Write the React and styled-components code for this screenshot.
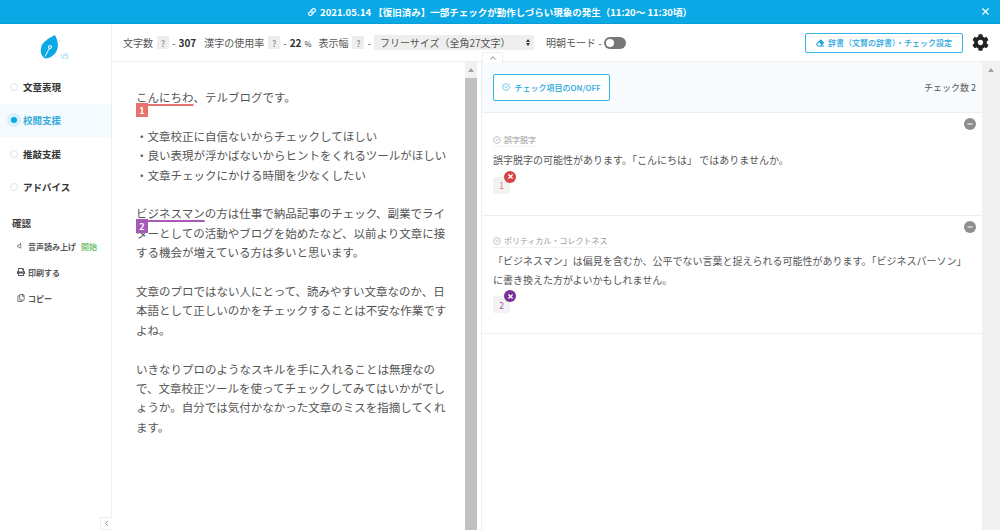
import React from 'react';
import styled, { createGlobalStyle } from 'styled-components';
import { FaCog, FaEraser, FaPrint, FaRegCopy, FaLink, FaTimes, FaMinus } from 'react-icons/fa';
import { FiVolume, FiCheckCircle, FiChevronUp, FiChevronLeft, FiX } from 'react-icons/fi';

const GlobalStyle = createGlobalStyle`
  html, body {
    margin: 0;
    padding: 0;
    background: #fff;
    font-family: "Noto Sans CJK JP", "Noto Sans", sans-serif;
    color: #444;
  }
  * { box-sizing: border-box; }
`;

const Page = styled.div`
  position: relative;
  width: 1000px;
  height: 530px;
  display: flex;
  flex-direction: column;
  overflow: hidden;
`;

const Banner = styled.div`
  position: relative;
  height: 24px;
  flex: none;
  display: flex;
  align-items: center;
  justify-content: center;
  gap: 4px;
  background: #0aa8e4;
  border-bottom: 1px solid #0b9ed6;
  color: #fff;
  font-size: 9.5px;
  font-weight: 700;
`;

const BannerClose = styled.span`
  position: absolute;
  right: 9px;
  top: 6px;
  display: flex;
`;

const Body = styled.div`
  flex: 1;
  display: flex;
  min-height: 0;
`;

const Sidebar = styled.aside`
  width: 112px;
  flex: none;
  border-right: 1px solid #eee;
  padding-top: 11px;
`;

const Logo = styled.div`
  height: 35px;
  display: flex;
  justify-content: center;
  align-items: flex-start;
  padding-right: 2px;
  color: #8fd0ee;
  small {
    font-size: 7.5px;
    line-height: 8px;
    margin: 17px 0 0 1px;
  }
`;

const NavItem = styled.div`
  height: 33.5px;
  display: flex;
  align-items: center;
  gap: 2px;
  padding-left: 7px;
  font-size: 9.5px;
  font-weight: 700;
  color: ${p => (p.$active ? '#35a9dc' : '#333')};
  background: ${p => (p.$active ? '#f4fbfe' : 'transparent')};
`;

const NavDot = styled.span`
  width: 14px;
  height: 14px;
  flex: none;
  border-radius: 50%;
  display: flex;
  align-items: center;
  justify-content: center;
  background: ${p => (p.$active ? '#d8f0fb' : 'transparent')};
  &::after {
    content: '';
    width: 6px;
    height: 6px;
    border-radius: 50%;
    background: ${p => (p.$active ? '#0aa8e4' : '#fff')};
    border: ${p => (p.$active ? 'none' : '1px solid #e2e2e2')};
  }
`;

const SideTitle = styled.div`
  margin: 11px 0 2px 12px;
  font-size: 9.5px;
  font-weight: 700;
  line-height: 16px;
  color: #444;
`;

const SideLink = styled.div`
  height: 26px;
  display: flex;
  align-items: center;
  gap: 3px;
  padding-left: 17px;
  font-size: 8px;
  font-weight: 700;
  color: #555;
  em {
    font-style: normal;
    font-weight: 500;
    color: #5cb85c;
    margin-left: 2px;
  }
`;

const Main = styled.main`
  flex: 1;
  min-width: 0;
  display: flex;
  flex-direction: column;
`;

const Header = styled.header`
  height: 38px;
  flex: none;
  display: flex;
  align-items: center;
  padding: 0 11px;
  border-bottom: 1px solid #eee;
  font-size: 10px;
  color: #555;
`;

const Help = styled.span`
  width: 12px;
  height: 13px;
  margin: 0 3px 0 4px;
  display: inline-flex;
  align-items: center;
  justify-content: center;
  background: #eee;
  color: #777;
  font-size: 8.5px;
`;

const Stat = styled.b`
  margin: 0 8px 0 3px;
  color: #333;
  font-size: 10px;
  font-weight: 700;
  small {
    font-size: 7.5px;
    font-weight: 400;
    margin: 0 -1px 0 3px;
  }
`;

const Select = styled.div`
  width: 160px;
  height: 15px;
  margin: 0 12px 0 3px;
  padding: 0 4px 0 6px;
  display: flex;
  align-items: center;
  justify-content: space-between;
  background: #eee;
  color: #555;
  font-size: 10px;
`;

const SelectArrows = styled.span`
  display: flex;
  flex-direction: column;
  gap: 1px;
  &::before, &::after {
    content: '';
    border-left: 2px solid transparent;
    border-right: 2px solid transparent;
  }
  &::before { border-bottom: 3px solid #333; }
  &::after { border-top: 3px solid #333; }
`;

const Toggle = styled.span`
  width: 22px;
  height: 12px;
  margin-left: 2px;
  border-radius: 6px;
  background: #777;
  padding: 2px;
  display: flex;
  &::before {
    content: '';
    width: 8px;
    height: 8px;
    border-radius: 50%;
    background: #fff;
  }
`;

const OutlineButton = styled.div`
  height: ${p => p.$h}px;
  width: ${p => p.$w}px;
  display: flex;
  align-items: center;
  justify-content: center;
  gap: 4px;
  flex: none;
  border: 1px solid #35b4e6;
  border-radius: 2px;
  background: #fff;
  color: #1ea5dc;
  font-size: 8px;
  font-weight: 500;
`;

const DictButton = styled(OutlineButton)`
  margin-left: auto;
`;

const Gear = styled.span`
  display: flex;
  margin-left: 9px;
  color: #222;
`;

const Panes = styled.div`
  flex: 1;
  min-height: 0;
  display: flex;
`;

const Editor = styled.section`
  width: 353px;
  flex: none;
  padding: 26px 16px 0 24px;
  font-size: 11.5px;
  line-height: 19.4px;
  color: #555;
  white-space: nowrap;
`;

const Line = styled.div`
  min-height: 19.4px;
`;

const Marked = styled.span`
  position: relative;
  text-decoration: underline ${p => p.$color} 1.5px;
  text-underline-offset: 1.5px;
`;

const MarkTag = styled.span`
  position: absolute;
  left: 0;
  top: 14px;
  width: 12px;
  height: 14px;
  display: flex;
  align-items: center;
  justify-content: center;
  background: ${p => p.$color};
  color: #fff;
  font-size: 9px;
  font-weight: 700;
  line-height: 1;
`;

const Scrollbar = styled.div`
  width: ${p => p.$w}px;
  flex: none;
  display: flex;
  flex-direction: column;
  background: #f1f1f1;
`;

const ScrollArrow = styled.div`
  height: 16px;
  flex: none;
  display: flex;
  align-items: center;
  justify-content: center;
  &::before {
    content: '';
    border-left: 3px solid transparent;
    border-right: 3px solid transparent;
    border-bottom: 4px solid #a3a3a3;
  }
`;

const ScrollThumb = styled.div`
  flex: 1;
  background: #c1c1c1;
`;

const Gutter = styled.div`
  width: 5px;
  flex: none;
  border-right: 1px solid #eee;
`;

const Results = styled.section`
  flex: 1;
  min-width: 0;
  display: flex;
  flex-direction: column;
`;

const ResultsBar = styled.div`
  height: 51px;
  flex: none;
  display: flex;
  align-items: center;
  justify-content: space-between;
  padding: 0 6px 0 11px;
  background: #f7fbfd;
  border-bottom: 1px solid #eee;
  font-size: 9px;
  color: #555;
`;

const Card = styled.article`
  position: relative;
  height: ${p => p.$h}px;
  padding: ${p => p.$top}px 8px 0 11px;
  border-bottom: 1px solid #eee;
`;

const CardTitle = styled.div`
  display: flex;
  width: fit-content;
  align-items: center;
  gap: 3px;
  height: 14px;
  color: #9a9a9a;
  font-size: 8px;
  border-bottom: 1px solid #f3f3f3;
`;

const CardText = styled.p`
  margin: 4px 0 0;
  font-size: 10px;
  line-height: 18.5px;
  color: #555;
`;

const Chip = styled.div`
  position: relative;
  width: 17px;
  height: 17px;
  margin-top: 7px;
  display: flex;
  align-items: center;
  justify-content: center;
  background: #f2f2f2;
  border-radius: 2px;
  font-size: 8.5px;
  color: ${p => p.$color};
`;

const ChipRemove = styled.span`
  position: absolute;
  right: -6px;
  top: -6px;
  width: 12px;
  height: 12px;
  display: flex;
  align-items: center;
  justify-content: center;
  border-radius: 50%;
  background: ${p => p.$color};
  color: #fff;
`;

const Collapse = styled.span`
  position: absolute;
  top: 5px;
  right: 6px;
  width: 12px;
  height: 12px;
  display: flex;
  align-items: center;
  justify-content: center;
  border-radius: 50%;
  background: #8e8e8e;
  color: #fff;
`;

const TopTab = styled.div`
  position: absolute;
  left: 482px;
  top: 52px;
  width: 21px;
  height: 11px;
  display: flex;
  align-items: center;
  justify-content: center;
  background: #fff;
  border: 1px solid #eee;
  border-bottom: none;
  border-radius: 2px 2px 0 0;
  color: #666;
`;

const SideTab = styled.div`
  position: absolute;
  left: 100px;
  top: 517px;
  width: 12px;
  height: 13px;
  display: flex;
  align-items: center;
  justify-content: center;
  background: #fff;
  border: 1px solid #eee;
  border-right: none;
  color: #666;
`;

const LeafLogo = () => (
  <svg width="19" height="24" viewBox="0 0 19 24">
    <path d="M15 0C17.500 5 19 10 17 15C15.500 19 11 23 6 23.500C2 22.500 0 18 1 13C2 7 9 3 15 0Z" fill="#0aa8e4" />
    <path d="M5 21.500L9.500 13" stroke="#fff" strokeWidth="1" fill="none" />
    <circle cx="10" cy="12" r="1.500" fill="none" stroke="#fff" strokeWidth="1" />
  </svg>
);

const navItems = [
  { label: '文章表現' },
  { label: '校閲支援', active: true },
  { label: '推敲支援' },
  { label: 'アドバイス' },
];

const App = () => (
  <Page>
    <GlobalStyle />
    <Banner>
      <FaLink size={8} />
      <span>2021.05.14 【復旧済み】一部チェックが動作しづらい現象の発生（11:20～ 11:30頃）</span>
      <BannerClose><FiX size={11} strokeWidth={2.5} /></BannerClose>
    </Banner>
    <Body>
      <Sidebar>
        <Logo><LeafLogo /><small>v5</small></Logo>
        {navItems.map(item => (
          <NavItem key={item.label} $active={item.active}>
            <NavDot $active={item.active} />
            {item.label}
          </NavItem>
        ))}
        <SideTitle>確認</SideTitle>
        <SideLink><FiVolume size={8} />音声読み上げ <em>開始</em></SideLink>
        <SideLink><FaPrint size={8} />印刷する</SideLink>
        <SideLink><FaRegCopy size={8} />コピー</SideLink>
      </Sidebar>
      <Main>
        <Header>
          文字数<Help>?</Help>-<Stat>307</Stat>
          漢字の使用率<Help>?</Help>-<Stat>22<small>%</small></Stat>
          表示幅<Help>?</Help>-
          <Select>フリーサイズ（全角27文字）<SelectArrows /></Select>
          明朝モード -<Toggle />
          <DictButton $w={158} $h={20}><FaEraser size={8} />辞書（文賢の辞書）・チェック設定</DictButton>
          <Gear><FaCog size={17} /></Gear>
        </Header>
        <Panes>
          <Editor>
            <Line><Marked $color="#e5736f">こんにちわ<MarkTag $color="#e8736d">1</MarkTag></Marked>、テルブログです。</Line>
            <Line />
            <Line>・文章校正に自信ないからチェックしてほしい</Line>
            <Line>・良い表現が浮かばないからヒントをくれるツールがほしい</Line>
            <Line>・文章チェックにかける時間を少なくしたい</Line>
            <Line />
            <Line><Marked $color="#a85ab5">ビジネスマン<MarkTag $color="#a35bb5">2</MarkTag></Marked>の方は仕事で納品記事のチェック、副業でライ</Line>
            <Line>ターとしての活動やブログを始めたなど、以前より文章に接</Line>
            <Line>する機会が増えている方は多いと思います。</Line>
            <Line />
            <Line>文章のプロではない人にとって、読みやすい文章なのか、日</Line>
            <Line>本語として正しいのかをチェックすることは不安な作業です</Line>
            <Line>よね。</Line>
            <Line />
            <Line>いきなりプロのようなスキルを手に入れることは無理なの</Line>
            <Line>で、文章校正ツールを使ってチェックしてみてはいかがでし</Line>
            <Line>ょうか。自分では気付かなかった文章のミスを指摘してくれ</Line>
            <Line>ます。</Line>
          </Editor>
          <Scrollbar $w={12}><ScrollArrow /><ScrollThumb /></Scrollbar>
          <Gutter />
          <Results>
            <ResultsBar>
              <OutlineButton $w={117} $h={27}><FiCheckCircle size={8} />チェック項目のON/OFF</OutlineButton>
              <span>チェック数 2</span>
            </ResultsBar>
            <Card $h={103} $top={20}>
              <Collapse><FaMinus size={6} /></Collapse>
              <CardTitle><FiCheckCircle size={8} />誤字脱字</CardTitle>
              <CardText>誤字脱字の可能性があります。「こんにちは」 ではありませんか。</CardText>
              <Chip $color="#e5736f">1<ChipRemove $color="#d64545"><FaTimes size={7} /></ChipRemove></Chip>
            </Card>
            <Card $h={118} $top={18}>
              <Collapse><FaMinus size={6} /></Collapse>
              <CardTitle><FiCheckCircle size={8} />ポリティカル・コレクトネス</CardTitle>
              <CardText>「ビジネスマン」は偏見を含むか、公平でない言葉と捉えられる可能性があります。「ビジネスパーソン」<br />に書き換えた方がよいかもしれません。</CardText>
              <Chip $color="#a85ab5">2<ChipRemove $color="#7d2f96"><FaTimes size={7} /></ChipRemove></Chip>
            </Card>
          </Results>
          <Scrollbar $w={18}><ScrollArrow /></Scrollbar>
        </Panes>
      </Main>
    </Body>
    <TopTab><FiChevronUp size={10} /></TopTab>
    <SideTab><FiChevronLeft size={9} /></SideTab>
  </Page>
);

export default App;
